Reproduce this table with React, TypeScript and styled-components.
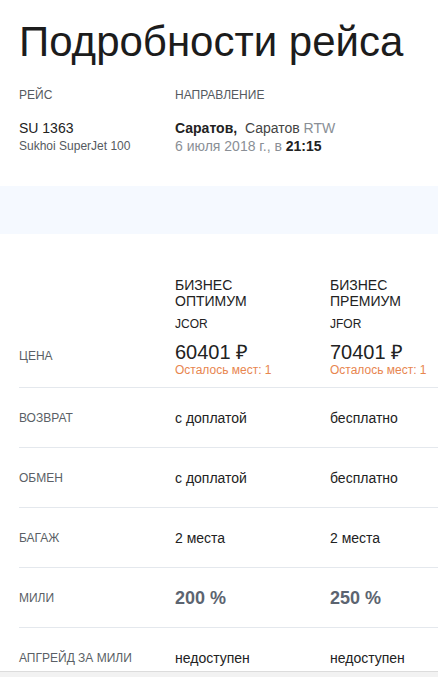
import React from 'react'
import styled, { createGlobalStyle } from 'styled-components'

const GlobalStyle = createGlobalStyle`
	html, body {
		margin: 0;
		padding: 0;
		background: #ffffff;
		font-family: 'Liberation Sans', Arial, sans-serif;
		color: #222;
	}
`

const Page = styled.div`
	width: 438px;
	height: 677px;
	overflow: hidden;
	position: relative;
`

const Title = styled.h1`
	margin: 0;
	padding: 18px 0 0 19px;
	font-size: 42px;
	line-height: 48px;
	font-weight: 400;
	color: #1c1c1c;
`

const Info = styled.div`
	display: grid;
	grid-template-columns: 156px 1fr;
	padding: 22px 19px 0 19px;
	height: 90px;
`

const Label = styled.div`
	font-size: 12px;
	line-height: 14px;
	color: #555a60;
	text-transform: uppercase;
`

const InfoBody = styled.div`
	margin-top: 17px;
`

const Main = styled.div`
	font-size: 14px;
	line-height: 18px;
	color: #222;
`

const Sub = styled.div`
	font-size: 12px;
	line-height: 18px;
	color: #555a60;
`

const City = styled.span`
	color: #444;
`

const Muted = styled.span`
	color: #8a8f96;
`

const Strong = styled.b`
	color: #222;
	font-weight: 700;
`

const Band = styled.div`
	height: 48px;
	margin-top: 8px;
	background: #f5f9ff;
`

const Table = styled.div`
	padding: 30px 0 0 19px;
`

const Row = styled.div<{ $tall?: boolean; $last?: boolean }>`
	display: grid;
	grid-template-columns: 156px 155px 1fr;
	align-items: ${(p) => (p.$tall ? 'end' : 'center')};
	height: ${(p) => (p.$tall ? '113px' : '59px')};
	border-bottom: ${(p) => (p.$last ? 'none' : '1px solid #e4e8ed')};
	padding-bottom: ${(p) => (p.$tall ? '10px' : '0')};
	box-sizing: content-box;
`

const RowLabel = styled.div`
	font-size: 12px;
	line-height: 14px;
	color: #5a5f66;
	text-transform: uppercase;
	align-self: center;
`

const PriceLabel = styled(RowLabel)`
	align-self: end;
	margin-bottom: 14px;
`

const Cell = styled.div`
	font-size: 14px;
	line-height: 18px;
	color: #222;
`

const Miles = styled.div`
	font-size: 18px;
	line-height: 20px;
	font-weight: 700;
	color: #5c6470;
`

const ClassName = styled.div`
	font-size: 14px;
	line-height: 16px;
	color: #222;
	text-transform: uppercase;
`

const Code = styled.div`
	font-size: 12px;
	line-height: 14px;
	color: #222;
	margin-top: 8px;
`

const Price = styled.div`
	font-size: 20px;
	line-height: 22px;
	color: #222;
	margin-top: 10px;
`

const Seats = styled.div`
	font-size: 12px;
	line-height: 14px;
	color: #e8864f;
`

const Footer = styled.div`
	position: absolute;
	left: 0;
	right: 0;
	bottom: 0;
	height: 5px;
	background: #f2f2f2;
	border-top: 1px solid #dcdcdc;
`

const fares = [
	{ name: ['Бизнес', 'Оптимум'], code: 'JCOR', price: '60401 ₽', back: 'с доплатой', swap: 'с доплатой', bag: '2 места', miles: '200 %' },
	{ name: ['Бизнес', 'Премиум'], code: 'JFOR', price: '70401 ₽', back: 'бесплатно', swap: 'бесплатно', bag: '2 места', miles: '250 %' },
]

export default function App() {
	return (
		<Page>
			<GlobalStyle />
			<Title>Подробности рейса</Title>
			<Info>
				<div>
					<Label>Рейс</Label>
					<InfoBody>
						<Main>SU 1363</Main>
						<Sub>Sukhoi SuperJet 100</Sub>
					</InfoBody>
				</div>
				<div>
					<Label>Направление</Label>
					<InfoBody>
						<Main>
							<Strong>Саратов,</Strong>&nbsp; <City>Саратов</City> <Muted>RTW</Muted>
						</Main>
						<Main>
							<Muted>6 июля 2018 г., в </Muted>
							<Strong>21:15</Strong>
						</Main>
					</InfoBody>
				</div>
			</Info>
			<Band />
			<Table>
				<Row $tall>
					<PriceLabel>Цена</PriceLabel>
					{fares.map((f) => (
						<div key={f.code}>
							<ClassName>
								{f.name[0]}
								<br />
								{f.name[1]}
							</ClassName>
							<Code>{f.code}</Code>
							<Price>{f.price}</Price>
							<Seats>Осталось мест: 1</Seats>
						</div>
					))}
				</Row>
				<Row>
					<RowLabel>Возврат</RowLabel>
					{fares.map((f) => (
						<Cell key={f.code}>{f.back}</Cell>
					))}
				</Row>
				<Row>
					<RowLabel>Обмен</RowLabel>
					{fares.map((f) => (
						<Cell key={f.code}>{f.swap}</Cell>
					))}
				</Row>
				<Row>
					<RowLabel>Багаж</RowLabel>
					{fares.map((f) => (
						<Cell key={f.code}>{f.bag}</Cell>
					))}
				</Row>
				<Row>
					<RowLabel>Мили</RowLabel>
					{fares.map((f) => (
						<Miles key={f.code}>{f.miles}</Miles>
					))}
				</Row>
				<Row $last>
					<RowLabel>Апгрейд за мили</RowLabel>
					{fares.map((f) => (
						<Cell key={f.code}>недоступен</Cell>
					))}
				</Row>
			</Table>
			<Footer />
		</Page>
	)
}
